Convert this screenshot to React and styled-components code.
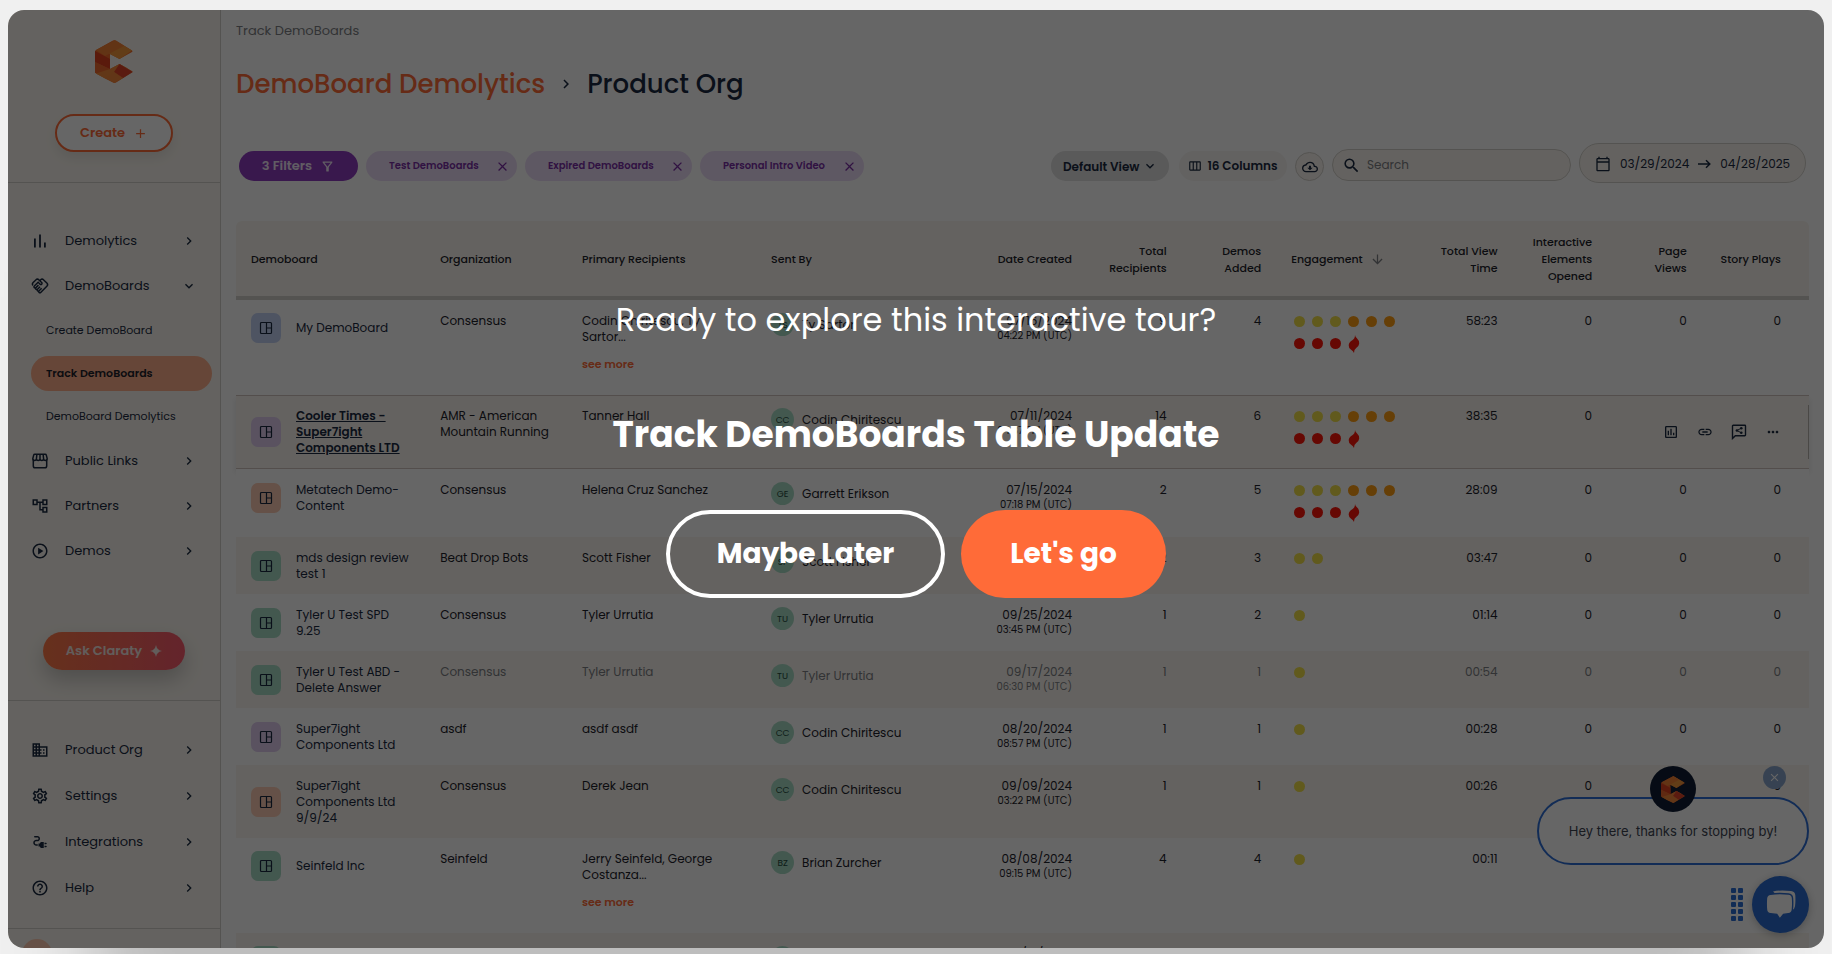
import React from "react";
import styled, { createGlobalStyle, css } from "styled-components";
import {
  MdOutlineHandshake,
  MdOutlineAccountTree,
  MdOutlinePlayCircle,
  MdOutlineDomain,
  MdOutlineSettings,
  MdOutlineElectricalServices,
  MdHelpOutline,
  MdOutlineFilterAlt,
  MdOutlineViewWeek,
  MdOutlineCloudDownload,
  MdSearch,
  MdOutlineCalendarToday,
  MdOutlineAssessment,
  MdLink,
  MdMoreHoriz,
  MdClose,
  MdAdd,
  MdChevronRight,
  MdExpandMore,
  MdArrowDownward,
} from "react-icons/md";

const c = {
  ink: "#1b2a41",
  text: "#1d222b",
  muted: "#7d7f84",
  orange: "#ff6b38",
  cream: "#faf6ef",
  line: "#d3d0cb",
  purple: "#7a2fa6",
  lilac: "#ecdcf7",
  white: "#ffffff",
};

const GlobalStyle = createGlobalStyle`
  *, *::before, *::after { box-sizing: border-box; }
  body {
    margin: 0;
    background: #f0f0f0;
    font-family: Poppins, Inter, sans-serif;
    color: ${c.text};
  }
  button, input, select { font: inherit; color: inherit; margin: 0; }
  button { cursor: pointer; }
  a { color: inherit; text-decoration: none; }
`;

const Page = styled.div`
  height: 100vh;
  padding: 10px 8px 6px;
  overflow: hidden;
`;

const Frame = styled.div`
  position: relative;
  display: flex;
  height: 100%;
  border-radius: 16px;
  background: ${c.white};
  box-shadow: 0 160px 80px -80px rgba(0, 0, 0, 0.22);
`;

const AppShell = styled.div`
  display: flex;
  flex: 1;
  min-width: 0;
  overflow: hidden;
  border-radius: 16px;
`;

/* Sidebar */

const Sidebar = styled.aside`
  flex: 0 0 213px;
  background: ${c.cream};
  border-right: 1px solid ${c.line};
`;

const SidebarHeader = styled.div`
  display: flex;
  flex-direction: column;
  align-items: center;
  gap: 31px;
  padding: 30px 0;
  border-bottom: 1px solid ${c.line};
`;

const CreateButton = styled.button`
  display: flex;
  align-items: center;
  justify-content: center;
  gap: 8px;
  width: 118px;
  height: 38px;
  padding: 0;
  border: 2px solid ${c.orange};
  border-radius: 19px;
  background: ${c.white};
  color: ${c.orange};
  font-size: 13px;
  font-weight: 600;
  box-shadow: 0 6px 12px rgba(0, 0, 0, 0.08);
`;

const Nav = styled.nav`
  display: flex;
  flex-direction: column;
  padding: ${(p) => (p.$secondary ? "26px 0 17px" : "35px 0 59px")};
`;

const NavItem = styled.a`
  display: flex;
  align-items: center;
  gap: 16px;
  height: ${(p) => (p.$tall ? 46 : 45)}px;
  padding: 0 23px;
  color: ${c.ink};
  font-size: 13px;
`;

const NavLabel = styled.span`
  flex: 1;
`;

const SubList = styled.div`
  padding-top: 1px;
`;

const SubItem = styled.a`
  display: flex;
  align-items: center;
  height: 35px;
  margin: 4px 8px 8px 23px;
  padding: 0 15px;
  border-radius: 18px;
  color: ${c.ink};
  font-size: 11px;
  white-space: nowrap;

  &:last-child {
    margin-bottom: 4px;
  }

  & + & {
    margin-top: 0;
  }

  ${(p) =>
    p.$active &&
    css`
      background: #ffaf8c;
      color: ${c.text};
      font-weight: 600;
    `}
`;

const ClaratyArea = styled.div`
  display: flex;
  justify-content: center;
  padding-bottom: 30px;
  border-bottom: 1px solid ${c.line};
`;

const ClaratyButton = styled.button`
  display: flex;
  align-items: center;
  justify-content: center;
  gap: 8px;
  width: 142px;
  height: 38px;
  padding: 0;
  border: 0;
  border-radius: 19px;
  background: linear-gradient(90deg, #ff7a48, #fa5a6e);
  color: #f4e9e4;
  font-size: 13px;
  font-weight: 600;
  box-shadow: 0 10px 20px rgba(0, 0, 0, 0.2);
`;

const UserArea = styled.div`
  padding: 10px 14px;
  border-top: 1px solid ${c.line};
`;

const UserBadge = styled.div`
  width: 30px;
  height: 30px;
  border-radius: 50%;
  background: #ffc9ae;
`;

/* Main column */

const Main = styled.main`
  flex: 1;
  min-width: 0;
  padding: 11px 15px 0;
  overflow: hidden;
`;

const Crumb = styled.div`
  color: ${c.muted};
  font-size: 13px;
  line-height: 20px;
`;

const Title = styled.h1`
  display: flex;
  align-items: center;
  gap: 12px;
  margin: 22px 0 38px;
  color: ${c.ink};
  font-size: 26px;
  font-weight: 500;
  line-height: 42px;

  a {
    color: ${c.orange};
  }
`;

const Toolbar = styled.div`
  display: flex;
  align-items: flex-end;
  gap: 8px;
  margin-bottom: 38px;
  padding: 0 3px;

  & > * {
    margin-bottom: 2px;
  }
`;

const Spacer = styled.div`
  flex: 1;
`;

const FiltersButton = styled.button`
  display: flex;
  align-items: center;
  justify-content: center;
  gap: 8px;
  width: 119px;
  height: 30px;
  padding: 0;
  border: 0;
  border-radius: 15px;
  background: #8f3cc0;
  color: #f3e8fa;
  font-size: 13px;
  font-weight: 600;
`;

const Chip = styled.span`
  display: flex;
  align-items: center;
  justify-content: space-between;
  width: ${(p) => p.$width}px;
  height: 30px;
  padding: 0 7px 0 23px;
  border-radius: 15px;
  background: ${c.lilac};
  color: ${c.purple};
  font-size: 10px;
  font-weight: 600;
`;

const ChipClose = styled.button`
  display: flex;
  padding: 0;
  border: 0;
  background: none;
  font-size: 15px;
`;

const ViewPicker = styled.label`
  display: flex;
  align-items: center;
  width: 118px;
  height: 30px;
  margin-right: 2px;
  padding: 0 11px 0 12px;
  border-radius: 15px;
  background: #e0e0e0;
  color: ${c.ink};
  font-size: 12px;
  font-weight: 600;

  select {
    flex: 1;
    min-width: 0;
    padding: 0;
    border: 0;
    appearance: none;
    background: none;
    outline: 0;
  }
`;

const ColumnsButton = styled.button`
  display: flex;
  align-items: center;
  justify-content: center;
  gap: 5px;
  width: 108px;
  height: 30px;
  padding: 0;
  border: 0;
  border-radius: 15px;
  background: #f7f5f2;
  color: ${c.ink};
  font-size: 12px;
  font-weight: 600;
`;

const RoundButton = styled.button`
  display: flex;
  align-items: center;
  justify-content: center;
  width: 29px;
  height: 29px;
  padding: 0;
  border: 1px solid ${c.line};
  border-radius: 50%;
  background: ${c.cream};
  color: ${c.ink};
  font-size: 16px;
`;

const SearchBox = styled.label`
  display: flex;
  align-items: center;
  gap: 6px;
  width: 239px;
  height: 32px;
  padding: 0 10px 0 9px;
  border: 1px solid ${c.line};
  border-radius: 16px;
  background: ${c.cream};
  color: ${c.ink};
  font-size: 19px;

  input {
    flex: 1;
    min-width: 0;
    padding: 0;
    border: 0;
    background: none;
    outline: 0;
    font-size: 12px;
  }

  input::placeholder {
    color: ${c.muted};
    opacity: 1;
  }
`;

const DateRange = styled.button`
  display: flex;
  align-items: center;
  justify-content: center;
  gap: 9px;
  width: 227px;
  height: 40px;
  padding: 2px 0 0;
  border: 1px solid ${c.line};
  border-radius: 20px;
  background: ${c.cream};
  color: ${c.ink};
  font-size: 12px;

  && {
    margin-bottom: 0;
  }
`;

/* Table */

const Table = styled.table`
  width: 100%;
  table-layout: fixed;
  border-spacing: 0;
  font-size: 12px;
  line-height: 16px;
`;

const Col = styled.col`
  width: ${(p) => p.$share}%;
`;

const Th = styled.th`
  height: 79px;
  padding: 13px 15px 11px;
  background: ${c.cream};
  border-bottom: 4px solid ${c.line};
  font-size: 11px;
  font-weight: 500;
  line-height: 17px;
  text-align: ${(p) => (p.$right ? "right" : "left")};
  white-space: nowrap;

  &:first-child {
    border-top-left-radius: 6px;
  }

  &:last-child {
    padding-right: 28px;
    border-top-right-radius: 6px;
  }
`;

const SortHead = styled.span`
  display: flex;
  align-items: center;
  gap: 7px;

  svg {
    color: ${c.muted};
    font-size: 15px;
  }
`;

const Td = styled.td`
  padding: 13px 0 12px 15px;
  vertical-align: top;
  white-space: nowrap;

  ${(p) =>
    p.$right &&
    css`
      padding: 13px 15px 12px 0;
      text-align: right;
    `}

  &:last-child {
    padding-right: 28px;
  }
`;

const ActionsTd = styled(Td)`
  background: linear-gradient(#b9b5b0, #b9b5b0) right center / 1px 54px no-repeat;
`;

const Tr = styled.tr`
  background: ${(p) => (p.$striped ? c.cream : c.white)};
  color: ${(p) => (p.$faded ? c.muted : c.text)};

  ${(p) =>
    p.$active &&
    css`
      box-shadow: 0 4px 6px rgba(0, 0, 0, 0.1);

      ${Td} {
        border-bottom: 1px solid #cfc3bf;
        box-shadow: inset 0 1px 0 #cfc3bf;
      }
    `}
`;

const NameLink = styled.a`
  display: flex;
  align-items: center;
  gap: 15px;
  color: ${c.ink};
  ${(p) =>
    p.$active &&
    css`
      font-weight: 600;
      text-decoration: underline;
    `}
`;

const tints = {
  blue: "#c4d3f5",
  violet: "#e0cdf0",
  peach: "#fccbb3",
  green: "#a9dcc6",
};

const BoardIcon = styled.span`
  display: flex;
  flex: 0 0 30px;
  align-items: center;
  justify-content: center;
  height: 30px;
  border-radius: 7px;
  background: ${(p) => tints[p.$tint]};
`;

const Line = styled.span`
  display: block;
`;

const SeeMore = styled.button`
  display: block;
  margin: 11px 0;
  padding: 0;
  border: 0;
  background: none;
  color: ${c.orange};
  font-size: 11px;
  font-weight: 600;
  line-height: 16px;
`;

const Sender = styled.div`
  display: flex;
  align-items: center;
  gap: 8px;
`;

const Avatar = styled.span`
  display: flex;
  align-items: center;
  justify-content: center;
  width: 23px;
  height: 23px;
  border-radius: 50%;
  background: #a9dcc6;
  color: #1f4a3c;
  font-size: 9px;
`;

const Time = styled.span`
  display: block;
  font-size: 10px;
  line-height: 14px;
`;

const Dots = styled.div`
  display: flex;
  flex-wrap: wrap;
  gap: 11px 7px;
  width: 104px;
  padding: 3px 0 7px;
  margin-left: 3px;
  box-sizing: content-box;
`;

const Dot = styled.span`
  width: 11px;
  height: 11px;
  border-radius: 50%;
  background: ${(p) => p.$color};
`;

const FlameBox = styled.span`
  display: flex;
  align-items: center;
  justify-content: center;
  width: 11px;
  height: 11px;

  svg {
    flex: none;
  }
`;

const Actions = styled.div`
  display: flex;
  justify-content: flex-end;
  gap: 18px;
  padding-top: 16px;
`;

const ActionButton = styled.button`
  display: flex;
  padding: 0;
  border: 0;
  background: none;
  color: ${c.ink};
  font-size: 16px;
`;

/* Chat widget */

const ChatDock = styled.div`
  position: absolute;
  right: 15px;
  bottom: 15px;
  display: flex;
  flex-direction: column;
  align-items: flex-end;
  gap: 11px;
`;

const Bubble = styled.div`
  position: relative;
  display: flex;
  align-items: center;
  justify-content: center;
  width: 272px;
  height: 68px;
  border: 2px solid #2f6fd6;
  border-radius: 34px;
  background: ${c.white};
  color: #3c4452;
  font-family: Inter, sans-serif;
  font-size: 13px;
`;

const BubbleLogo = styled.span`
  position: absolute;
  top: -33px;
  left: calc(50% - 23px);
  display: flex;
  align-items: center;
  justify-content: center;
  width: 46px;
  height: 46px;
  border-radius: 50%;
  background: #0f1d36;
`;

const BubbleClose = styled.button`
  position: absolute;
  top: -33px;
  right: 21px;
  display: flex;
  align-items: center;
  justify-content: center;
  width: 23px;
  height: 23px;
  padding: 0;
  border: 0;
  border-radius: 50%;
  background: #8ba6cc;
  color: ${c.white};
  font-size: 13px;
`;

const LauncherRow = styled.div`
  display: flex;
  align-items: center;
  gap: 9px;
`;

const Grip = styled.div`
  display: grid;
  grid-template-columns: repeat(2, 5px);
  gap: 2px;

  span {
    height: 5px;
    border-radius: 1px;
    background: #2c6fd4;
  }
`;

const Launcher = styled.button`
  display: flex;
  align-items: center;
  justify-content: center;
  width: 57px;
  height: 57px;
  padding: 0;
  border: 0;
  border-radius: 50%;
  background: #2b6cd2;
  box-shadow: 0 2px 8px rgba(0, 0, 0, 0.25);
`;

/* Tour prompt */

const Overlay = styled.div`
  position: absolute;
  inset: 0;
  display: flex;
  flex-direction: column;
  align-items: center;
  justify-content: center;
  padding-bottom: 67px;
  border-radius: 16px;
  background: rgba(0, 0, 0, 0.6);
  color: ${c.white};
  text-align: center;
`;

const Prompt = styled.p`
  margin: 0 0 60px;
  font-size: 32px;
  line-height: 54px;
`;

const TourTitle = styled.h2`
  margin: 0 0 47px;
  font-size: 36px;
  font-weight: 700;
  line-height: 56px;
`;

const TourActions = styled.div`
  display: flex;
  gap: 16px;
`;

const TourButton = styled.button`
  height: 88px;
  width: ${(p) => (p.$primary ? 205 : 279)}px;
  padding: 0;
  border: ${(p) => (p.$primary ? "0" : `4px solid ${c.white}`)};
  border-radius: 44px;
  background: ${(p) => (p.$primary ? c.orange : "transparent")};
  color: ${c.white};
  font-size: 28px;
  font-weight: 700;
`;

/* Drawings */

const Logo = ({ width = 38 }) => (
  <svg width={width} height={Math.round((width * 43) / 38)} viewBox="0 0 38 43" aria-hidden="true">
    <path d="M1 10 18 .6q1.500-.8 3 0L37 10.500q1 .8 0 1.500L24.500 19 15 14v15l9.500-5L37 31q1.200.8 0 1.600L21 42.400q-1.500.8-3 0L1 33.500q-1-.6-1-2v-20q0-1 1-1.500Z" fill="#f36a2a" />
    <path d="M19.500.2 37 10.500 24.500 19 10 11.500Z" fill="#f59a3c" />
    <path d="M19.500.2 29 6 10 16 1 10Z" fill="#f58236" />
    <path d="M0 11 15 19v10L0 22Z" fill="#e0411f" />
    <path d="M0 22 15 29 0 33Z" fill="#ef6a2f" />
    <path d="M15 29 24.500 24 33 28.500 10 38.500 1 33.500Z" fill="#f68b3a" />
    <path d="M24.500 24 37.500 32 28 38 19 32Z" fill="#e2442a" />
    <path d="M10 38.500 19 32 28 38 19.500 43Z" fill="#f4873a" />
  </svg>
);

const BarsIcon = () => (
  <svg width="18" height="18" viewBox="0 0 18 18" fill="currentColor" aria-hidden="true">
    <path d="M3 6.500h1.800V15.500H3zM8.100 2.500H9.900V15.500H8.100zM13 10.500h1.800v5H13z" />
  </svg>
);

const StoreIcon = () => (
  <svg width="18" height="18" viewBox="0 0 18 18" fill="none" stroke="currentColor" strokeWidth="1.500" aria-hidden="true">
    <path d="M2.300 7.500V14q0 1.800 1.800 1.800h9.800q1.800 0 1.800-1.800V7.500" />
    <path d="M3.800 2.200h10.400q.9 0 1.100.9l.9 3.500q0 1.900-1.800 1.900-1.600 0-1.800-1.700-.2 1.700-1.800 1.700T9 6.800q-.2 1.700-1.800 1.700T5.400 6.800Q5.200 8.500 3.600 8.500q-1.800 0-1.800-1.900l.9-3.500q.2-.9 1.100-.9ZM9 2.200v4.600M5.900 2.200l-.5 4.600M12.100 2.200l.5 4.600" />
  </svg>
);

const Sparkle = () => (
  <svg width="12" height="12" viewBox="0 0 12 12" fill="currentColor" aria-hidden="true">
    <path d="M6 0Q6.700 3.300 8 4 8.700 5.300 12 6 8.700 6.700 8 8 6.700 8.700 6 12 5.300 8.700 4 8 3.300 6.700 0 6 3.300 5.300 4 4 5.300 3.300 6 0Z" />
  </svg>
);

const BoardGlyph = () => (
  <svg width="14" height="14" viewBox="0 0 14 14" fill="none" stroke="#1b2a41" strokeWidth="1.200" aria-hidden="true">
    <rect x="1.500" y="1.500" width="11" height="11" rx="1" />
    <path d="M7.500 1.500v11M7.500 7h5" />
  </svg>
);

const LongArrow = () => (
  <svg width="13" height="10" viewBox="0 0 13 10" fill="none" stroke="currentColor" strokeWidth="1.500" aria-hidden="true">
    <path d="M0 5h11.500M8 1.300 11.800 5 8 8.700" />
  </svg>
);

const Flame = () => (
  <svg width="12" height="18" viewBox="0 0 12 18" fill="#ff1508" aria-hidden="true">
    <path d="M7 0q.2 1.800 1.900 3.200Q11.400 5.400 11.200 8.600q-.3 3-3 4.400-2.300 1.300-2.200 5-.7-2-2.900-3.200Q.5 13.200.7 10.200.9 7 4.300 5.200 7 3.800 7 0Z" />
  </svg>
);

const ShareNote = () => (
  <svg width="16" height="16" viewBox="0 0 16 16" fill="none" stroke="currentColor" strokeWidth="1.400" aria-hidden="true">
    <path d="M1.500 14.500V2q0-.7.7-.7h11.600q.7 0 .7.700v9q0 .7-.7.700H4.300Z" />
    <path d="M10 4.300 6 6.500l4 2.200" strokeWidth="1" />
    <g fill="currentColor" stroke="none">
      <circle cx="10.300" cy="4.200" r="1.300" />
      <circle cx="5.900" cy="6.500" r="1.300" />
      <circle cx="10.300" cy="8.800" r="1.300" />
    </g>
  </svg>
);

const ChatGlyph = () => (
  <svg width="30" height="30" viewBox="0 0 30 30" aria-hidden="true">
    <path d="M7 1.500Q14-.3 25 1q4 .4 4.300 4.300.4 6-.3 11-.3 3-3 3.700" fill="#fff" />
    <path d="M4.500 4.200Q13 2.800 22.500 4q3.700.5 4 4 .5 6-.1 11.500-.4 3.800-4 4.300l-4.900.6-3.700 4.600-3-4.600-6.300-.6Q.8 23.400.500 19.500q-.5-6 0-11.300.3-3.500 4-4Z" fill="#fff" stroke="#2b6cd2" strokeWidth="1.400" />
  </svg>
);

/* Data */

const mainNav = [
  { label: "Demolytics", icon: <BarsIcon /> },
  {
    label: "DemoBoards",
    icon: <MdOutlineHandshake size={18} />,
    open: true,
    items: ["Create DemoBoard", "Track DemoBoards", "DemoBoard Demolytics"],
  },
  { label: "Public Links", icon: <StoreIcon /> },
  { label: "Partners", icon: <MdOutlineAccountTree size={18} /> },
  { label: "Demos", icon: <MdOutlinePlayCircle size={18} /> },
];

const orgNav = [
  { label: "Product Org", icon: <MdOutlineDomain size={18} /> },
  { label: "Settings", icon: <MdOutlineSettings size={18} /> },
  { label: "Integrations", icon: <MdOutlineElectricalServices size={18} /> },
  { label: "Help", icon: <MdHelpOutline size={18} /> },
];

const chips = [
  { label: "Test DemoBoards", width: 151 },
  { label: "Expired DemoBoards", width: 167 },
  { label: "Personal Intro Video", width: 164 },
];

const columns = [
  { share: 12, lines: ["Demoboard"] },
  { share: 9, lines: ["Organization"] },
  { share: 12, lines: ["Primary Recipients"] },
  { share: 12, lines: ["Sent By"] },
  { share: 9, lines: ["Date Created"], right: true },
  { share: 6, lines: ["Total", "Recipients"], right: true },
  { share: 6, lines: ["Demos", "Added"], right: true },
  { share: 9, lines: ["Engagement"], sorted: true },
  { share: 6, lines: ["Total View", "Time"], right: true },
  { share: 6, lines: ["Interactive", "Elements", "Opened"], right: true },
  { share: 6, lines: ["Page", "Views"], right: true },
  { share: 6.8, lines: ["Story Plays"], right: true },
];

const rows = [
  { tint: "blue", name: ["My DemoBoard"], org: ["Consensus"], to: ["Codin Chiritescu, Ty", "Sartor..."], more: true, by: ["TS", "Ty Sartor"], date: "07/16/2024", time: "04:22 PM (UTC)", total: 9, demos: 4, score: 10, view: "58:23" },
  { tint: "violet", name: ["Cooler Times -", "Super7ight", "Components LTD"], org: ["AMR - American", "Mountain Running"], to: ["Tanner Hall"], by: ["CC", "Codin Chiritescu"], date: "07/11/2024", time: "04:37 PM (UTC)", total: 14, demos: 6, score: 10, view: "38:35", active: true },
  { tint: "peach", name: ["Metatech Demo-", "Content"], org: ["Consensus"], to: ["Helena Cruz Sanchez"], by: ["GE", "Garrett Erikson"], date: "07/15/2024", time: "07:18 PM (UTC)", total: 2, demos: 5, score: 10, view: "28:09" },
  { tint: "green", name: ["mds design review", "test 1"], org: ["Beat Drop Bots"], to: ["Scott Fisher"], by: ["SF", "Scott Fisher"], date: "08/22/2024", time: "05:10 PM (UTC)", total: 2, demos: 3, score: 2, view: "03:47" },
  { tint: "green", name: ["Tyler U Test SPD", "9.25"], org: ["Consensus"], to: ["Tyler Urrutia"], by: ["TU", "Tyler Urrutia"], date: "09/25/2024", time: "03:45 PM (UTC)", total: 1, demos: 2, score: 1, view: "01:14" },
  { tint: "green", name: ["Tyler U Test ABD -", "Delete Answer"], org: ["Consensus"], to: ["Tyler Urrutia"], by: ["TU", "Tyler Urrutia"], date: "09/17/2024", time: "06:30 PM (UTC)", total: 1, demos: 1, score: 1, view: "00:54", faded: true },
  { tint: "violet", name: ["Super7ight", "Components Ltd"], org: ["asdf"], to: ["asdf asdf"], by: ["CC", "Codin Chiritescu"], date: "08/20/2024", time: "08:57 PM (UTC)", total: 1, demos: 1, score: 1, view: "00:28" },
  { tint: "peach", name: ["Super7ight", "Components Ltd", "9/9/24"], org: ["Consensus"], to: ["Derek Jean"], by: ["CC", "Codin Chiritescu"], date: "09/09/2024", time: "03:22 PM (UTC)", total: 1, demos: 1, score: 1, view: "00:26" },
  { tint: "green", name: ["Seinfeld Inc"], org: ["Seinfeld"], to: ["Jerry Seinfeld, George", "Costanza..."], more: true, by: ["BZ", "Brian Zurcher"], date: "08/08/2024", time: "09:15 PM (UTC)", total: 4, demos: 4, score: 1, view: "00:11" },
  { tint: "green", name: [], org: [], to: [], by: ["", ""], date: "09/12/2024", score: 0 },
];

const dotColor = (i) => (i < 3 ? "#f2e04a" : i < 6 ? "#ff9d12" : "#ff1508");

const Lines = ({ items }) => items.map((t) => <Line key={t}>{t}</Line>);

const Engagement = ({ score }) => (
  <Dots>
    {Array.from({ length: Math.min(score, 9) }, (_, i) => (
      <Dot key={i} $color={dotColor(i)} />
    ))}
    {score > 9 && (
      <FlameBox>
        <Flame />
      </FlameBox>
    )}
  </Dots>
);

const NavGroup = ({ items, tall }) =>
  items.map((item) => (
    <React.Fragment key={item.label}>
      <NavItem href="#" $tall={tall}>
        {item.icon}
        <NavLabel>{item.label}</NavLabel>
        {item.open ? <MdExpandMore size={16} /> : <MdChevronRight size={16} />}
      </NavItem>
      {item.items && (
        <SubList>
          {item.items.map((sub) => (
            <SubItem key={sub} href="#" $active={sub === "Track DemoBoards"}>
              {sub}
            </SubItem>
          ))}
        </SubList>
      )}
    </React.Fragment>
  ));

const BoardRow = ({ row, striped }) => (
  <Tr $striped={striped} $active={row.active} $faded={row.faded}>
    <Td>
      <NameLink href="#" $active={row.active}>
        <BoardIcon $tint={row.tint}>
          <BoardGlyph />
        </BoardIcon>
        <span>
          <Lines items={row.name} />
        </span>
      </NameLink>
    </Td>
    <Td>
      <Lines items={row.org} />
    </Td>
    <Td>
      <Lines items={row.to} />
      {row.more && <SeeMore type="button">see more</SeeMore>}
    </Td>
    <Td>
      <Sender>
        <Avatar>{row.by[0]}</Avatar>
        {row.by[1]}
      </Sender>
    </Td>
    <Td $right>
      {row.date}
      <Time>{row.time}</Time>
    </Td>
    <Td $right>{row.total}</Td>
    <Td $right>{row.demos}</Td>
    <Td>
      <Engagement score={row.score} />
    </Td>
    <Td $right>{row.view}</Td>
    <Td $right>{row.view && 0}</Td>
    {row.active ? (
      <ActionsTd $right colSpan={2}>
        <Actions>
          <ActionButton type="button" aria-label="Report"><MdOutlineAssessment /></ActionButton>
          <ActionButton type="button" aria-label="Copy link"><MdLink /></ActionButton>
          <ActionButton type="button" aria-label="Share"><ShareNote /></ActionButton>
          <ActionButton type="button" aria-label="More"><MdMoreHoriz /></ActionButton>
        </Actions>
      </ActionsTd>
    ) : (
      <>
        <Td $right>{row.view && 0}</Td>
        <Td $right>{row.view && 0}</Td>
      </>
    )}
  </Tr>
);

export default function App() {
  return (
    <Page>
      <GlobalStyle />
      <Frame>
        <AppShell>
          <Sidebar>
            <SidebarHeader>
              <Logo />
              <CreateButton type="button">
                Create <MdAdd size={15} />
              </CreateButton>
            </SidebarHeader>
            <Nav aria-label="Main">
              <NavGroup items={mainNav} />
            </Nav>
            <ClaratyArea>
              <ClaratyButton type="button">
                Ask Claraty <Sparkle />
              </ClaratyButton>
            </ClaratyArea>
            <Nav $secondary aria-label="Organization">
              <NavGroup items={orgNav} tall />
            </Nav>
            <UserArea>
              <UserBadge />
            </UserArea>
          </Sidebar>

          <Main>
            <Crumb>Track DemoBoards</Crumb>
            <Title>
              <a href="#">DemoBoard Demolytics</a>
              <MdChevronRight size={18} />
              Product Org
            </Title>
            <Toolbar>
              <FiltersButton type="button">
                3 Filters <MdOutlineFilterAlt size={15} />
              </FiltersButton>
              {chips.map((chip) => (
                <Chip key={chip.label} $width={chip.width}>
                  {chip.label}
                  <ChipClose type="button" aria-label={`Remove ${chip.label}`}>
                    <MdClose />
                  </ChipClose>
                </Chip>
              ))}
              <Spacer />
              <ViewPicker>
                <select aria-label="View" defaultValue="Default View">
                  <option>Default View</option>
                </select>
                <MdExpandMore size={16} />
              </ViewPicker>
              <ColumnsButton type="button">
                <MdOutlineViewWeek size={14} /> 16 Columns
              </ColumnsButton>
              <RoundButton type="button" aria-label="Download">
                <MdOutlineCloudDownload />
              </RoundButton>
              <SearchBox>
                <MdSearch />
                <input type="text" placeholder="Search" aria-label="Search" />
              </SearchBox>
              <DateRange type="button">
                <MdOutlineCalendarToday size={16} />
                03/29/2024
                <LongArrow />
                04/28/2025
              </DateRange>
            </Toolbar>
            <Table>
              <colgroup>
                {columns.map((col) => (
                  <Col key={col.lines[0]} $share={col.share} />
                ))}
              </colgroup>
              <thead>
                <tr>
                  {columns.map((col) => (
                    <Th key={col.lines[0]} $right={col.right} scope="col">
                      {col.sorted ? (
                        <SortHead>
                          {col.lines[0]} <MdArrowDownward />
                        </SortHead>
                      ) : (
                        <Lines items={col.lines} />
                      )}
                    </Th>
                  ))}
                </tr>
              </thead>
              <tbody>
                {rows.map((row, i) => (
                  <BoardRow key={i} row={row} striped={i % 2 === 1} />
                ))}
              </tbody>
            </Table>
          </Main>
        </AppShell>

        <ChatDock>
          <Bubble>
            Hey there, thanks for stopping by!
            <BubbleLogo>
              <Logo width={24} />
            </BubbleLogo>
            <BubbleClose type="button" aria-label="Dismiss message">
              <MdClose />
            </BubbleClose>
          </Bubble>
          <LauncherRow>
            <Grip>
              {Array.from({ length: 10 }, (_, i) => (
                <span key={i} />
              ))}
            </Grip>
            <Launcher type="button" aria-label="Open chat">
              <ChatGlyph />
            </Launcher>
          </LauncherRow>
        </ChatDock>

        <Overlay role="dialog" aria-label="Interactive tour">
          <Prompt>Ready to explore this interactive tour?</Prompt>
          <TourTitle>Track DemoBoards Table Update</TourTitle>
          <TourActions>
            <TourButton type="button">Maybe Later</TourButton>
            <TourButton type="button" $primary>
              Let's go
            </TourButton>
          </TourActions>
        </Overlay>
      </Frame>
    </Page>
  );
}
